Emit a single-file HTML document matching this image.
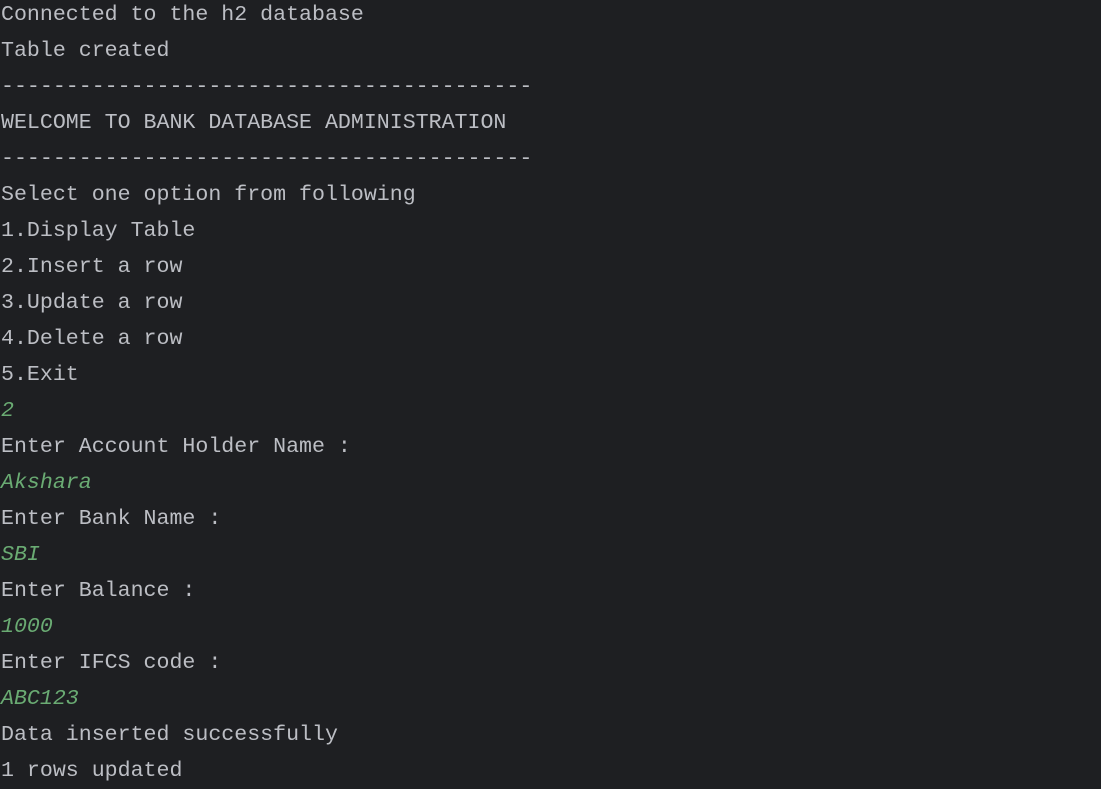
<!DOCTYPE html>
<html><head><style>
html,body{margin:0;padding:0;background:#1e1f22;width:1101px;height:786px;overflow:hidden}
pre{margin:0;position:absolute;left:1px;top:-3px;font-family:"Liberation Mono",monospace;font-size:21.6px;line-height:36px;color:#bcbec4}
i{color:#6aab73;font-style:italic}
</style></head><body><pre>Connected to the h2 database
Table created
-----------------------------------------
WELCOME TO BANK DATABASE ADMINISTRATION
-----------------------------------------
Select one option from following
1.Display Table
2.Insert a row
3.Update a row
4.Delete a row
5.Exit
<i>2</i>
Enter Account Holder Name :
<i>Akshara</i>
Enter Bank Name :
<i>SBI</i>
Enter Balance :
<i>1000</i>
Enter IFCS code :
<i>ABC123</i>
Data inserted successfully
1 rows updated</pre></body></html>
